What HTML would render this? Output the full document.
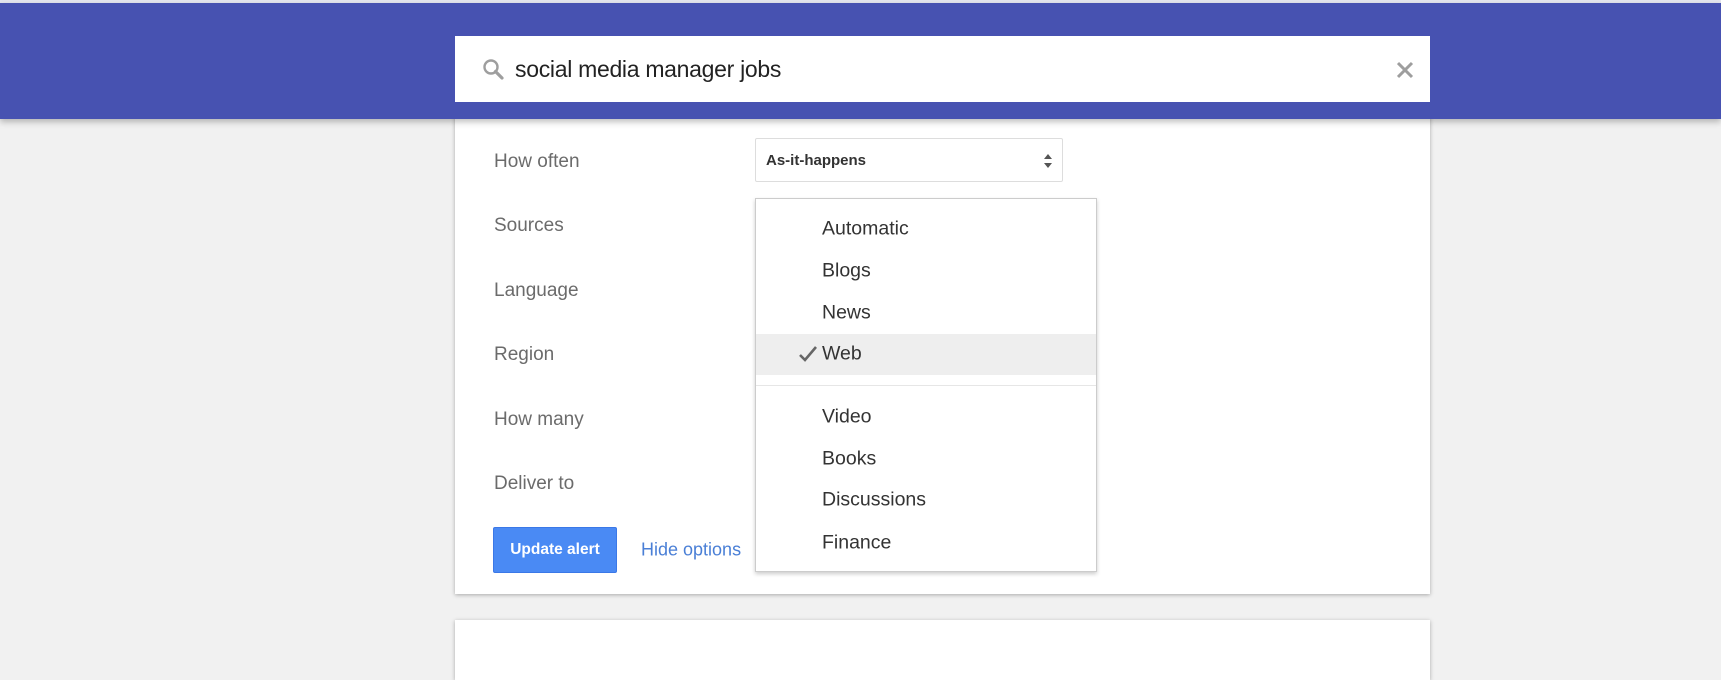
<!DOCTYPE html>
<html><head><meta charset="utf-8"><style>
*{margin:0;padding:0;box-sizing:border-box}
body{width:1721px;height:656px;background:#f1f1f1;position:relative;overflow:hidden;font-family:"Liberation Sans",sans-serif}
.top{position:absolute;left:0;top:0;width:1721px;height:3px;background:#e4e6ee}
.hdr{position:absolute;left:0;top:3px;width:1721px;height:116px;background:#4752b1;box-shadow:0 3px 6px rgba(0,0,0,.25);z-index:2}
.search{position:absolute;left:455px;top:36px;width:975px;height:66px;background:#fff;z-index:3}
.search .t{position:absolute;left:60px;top:20px;font-size:23px;color:#222;letter-spacing:-0.3px}
.card{position:absolute;left:455px;top:110px;width:975px;height:484px;background:#fff;box-shadow:0 1px 4px rgba(0,0,0,.3);z-index:1}
.card2{position:absolute;left:455px;top:620px;width:975px;height:60px;background:#fff;box-shadow:0 1px 4px rgba(0,0,0,.3)}
.lbl{position:absolute;left:494px;font-size:19px;color:#6b6b6b;z-index:3;transform:translateY(-50%)}
.sel{position:absolute;left:755px;top:138px;width:308px;height:44px;border:1px solid #ddd;border-radius:2px;background:#fff;z-index:3}
.sel span{position:absolute;left:10px;top:13px;font-size:15px;font-weight:bold;color:#333}
.dd{position:absolute;left:755px;top:198px;width:342px;height:374px;background:#fff;border:1px solid #ccc;box-shadow:0 2px 4px rgba(0,0,0,.2);z-index:4}
.it{position:absolute;left:66px;font-size:19.5px;color:#333;transform:translateY(-50%)}
.hl{position:absolute;left:0;top:135px;width:340px;height:41px;background:#eee}
.div{position:absolute;left:0;top:186px;width:340px;height:1px;background:#e6e6e6}
.btn{position:absolute;left:493px;top:527px;width:124px;height:46px;background:#4a8af4;border:1px solid #3b78e7;border-radius:2px;color:#fff;font-weight:bold;font-size:15.5px;text-align:center;line-height:44px;z-index:3}
.hide{position:absolute;left:641px;top:550px;transform:translateY(-50%);font-size:18px;color:#4a7fd6;z-index:3}
</style></head><body>
<div class="top"></div>
<div class="hdr"></div>
<div class="search">
<svg style="position:absolute;left:27px;top:22px" width="24" height="24" viewBox="0 0 24 24"><circle cx="9" cy="9" r="6.5" fill="none" stroke="#9e9e9e" stroke-width="2.4"/><path d="M13.5 13.5L20 20" stroke="#9e9e9e" stroke-width="3.2" stroke-linecap="round"/></svg>
<span class="t">social media manager jobs</span>
<svg style="position:absolute;left:940px;top:24px" width="20" height="20" viewBox="0 0 20 20"><path d="M3 3L17 17M17 3L3 17" stroke="#9e9e9e" stroke-width="3"/></svg>
</div>
<div class="card"></div>
<div class="card2"></div>
<div class="lbl" style="top:162px">How often</div>
<div class="lbl" style="top:226px">Sources</div>
<div class="lbl" style="top:291px">Language</div>
<div class="lbl" style="top:355px">Region</div>
<div class="lbl" style="top:420px">How many</div>
<div class="lbl" style="top:484px">Deliver to</div>
<div class="sel"><span>As-it-happens</span>
<svg style="position:absolute;left:287px;top:14px" width="10" height="16" viewBox="0 0 10 16"><path d="M1 6L5 1L9 6Z M1 10L5 15L9 10Z" fill="#555"/></svg></div>
<div class="dd">
<div class="hl"></div><div class="div"></div>
<div class="it" style="top:30px">Automatic</div>
<div class="it" style="top:72px">Blogs</div>
<div class="it" style="top:114px">News</div>
<svg style="position:absolute;left:42px;top:146px" width="20" height="18" viewBox="0 0 20 18"><path d="M2 10L7 15L18 2" fill="none" stroke="#666" stroke-width="2.6"/></svg>
<div class="it" style="top:155px">Web</div>
<div class="it" style="top:218px">Video</div>
<div class="it" style="top:260px">Books</div>
<div class="it" style="top:301px">Discussions</div>
<div class="it" style="top:344px">Finance</div>
</div>
<div class="btn">Update alert</div>
<div class="hide">Hide options</div>
</body></html>
